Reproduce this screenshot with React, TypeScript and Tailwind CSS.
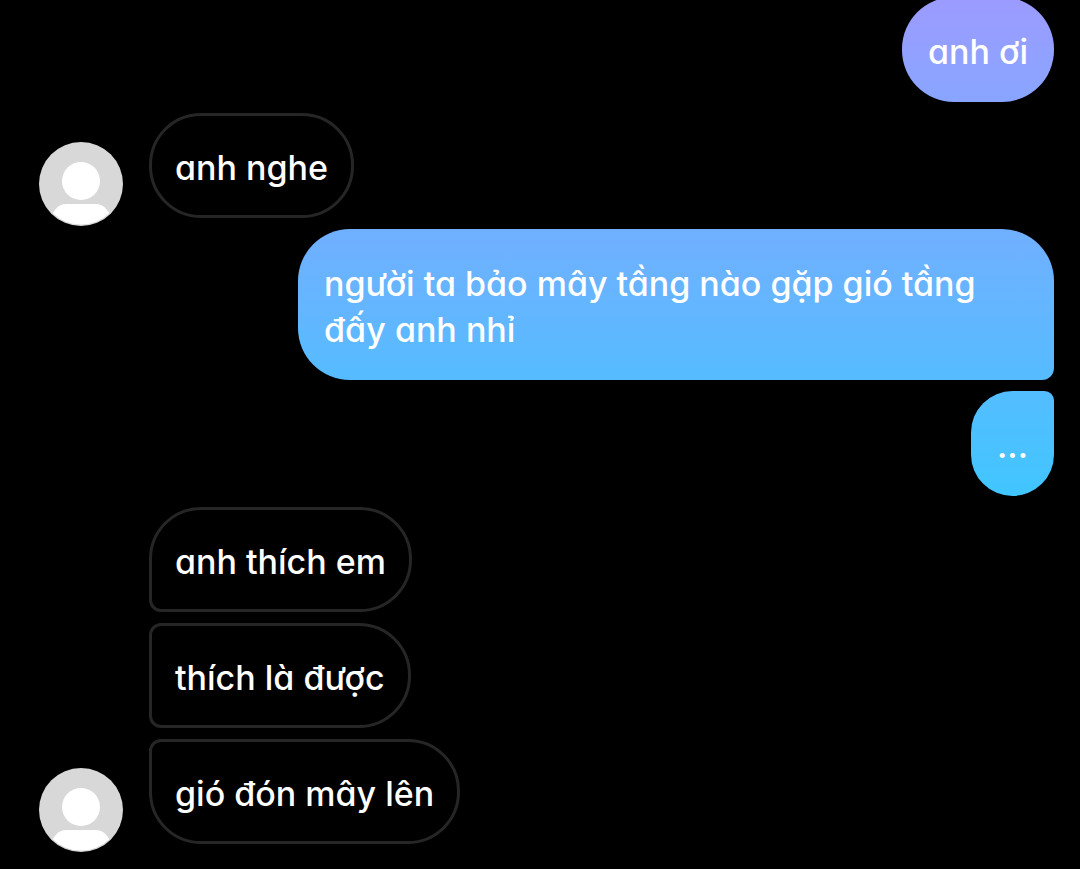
import { useId } from "react";
import clsx from "clsx";

type Message = {
  text: string;
  mine?: boolean;
  avatar?: boolean;
  shape: string;
};

const messages: Message[] = [
  { text: "anh ơi", mine: true, shape: "rounded-[52px] from-[#9c9bff] to-[#88a5ff]" },
  { text: "anh nghe", avatar: true, shape: "rounded-[52px]" },
  {
    text: "người ta bảo mây tầng nào gặp gió tầng đấy anh nhỉ",
    mine: true,
    shape: "rounded-[52px] rounded-br-[12px] from-[#70afff] to-[#55bcff]",
  },
  {
    text: "...",
    mine: true,
    shape: "rounded-[52px] rounded-tr-[12px] from-[#53bdff] to-[#40c6ff]",
  },
  { text: "anh thích em", shape: "rounded-[52px] rounded-bl-[12px]" },
  { text: "thích là được", shape: "rounded-[52px] rounded-l-[12px]" },
  { text: "gió đón mây lên", avatar: true, shape: "rounded-[52px] rounded-tl-[12px]" },
];

function Avatar() {
  const clip = useId();
  return (
    <svg viewBox="0 0 84 84" className="-mb-2 size-[84px]" role="img" aria-label="Avatar">
      <clipPath id={clip}>
        <circle cx="42" cy="41.6" r="41" />
      </clipPath>
      <circle cx="42" cy="42" r="42" fill="#d8d8d8" />
      <circle cx="42" cy="39" r="19" fill="#fff" />
      <path
        clipPath={`url(#${clip})`}
        d="M10 84V80C14 69 18 62 28 62H56C66 62 70 69 74 80V84Z"
        fill="#fff"
      />
    </svg>
  );
}

function Bubble({ message }: { message: Message }) {
  return (
    <p
      className={clsx(
        "text-[34px] leading-[46px] font-medium text-white",
        message.mine
          ? "max-w-[756px] bg-linear-to-b px-[26px] pt-[32px] pb-[27px]"
          : "border-3 border-[#262626] px-[23px] pt-[29px] pb-[24px]",
        message.shape,
      )}
    >
      {message.text}
    </p>
  );
}

export default function App() {
  return (
    <main className="min-h-screen overflow-hidden bg-black pr-[26px] pb-[25px] pl-[39px] font-['Inter','Noto_Sans',sans-serif] [font-feature-settings:'cv11']">
      <ol className="-mt-[3px] flex flex-col gap-[11px]">
        {messages.map((message) => (
          <li
            key={message.text}
            className={clsx("flex items-end", message.mine ? "justify-end" : "gap-[26px]")}
          >
            {!message.mine && (
              <div className="w-[84px] shrink-0">{message.avatar && <Avatar />}</div>
            )}
            <Bubble message={message} />
          </li>
        ))}
      </ol>
    </main>
  );
}
